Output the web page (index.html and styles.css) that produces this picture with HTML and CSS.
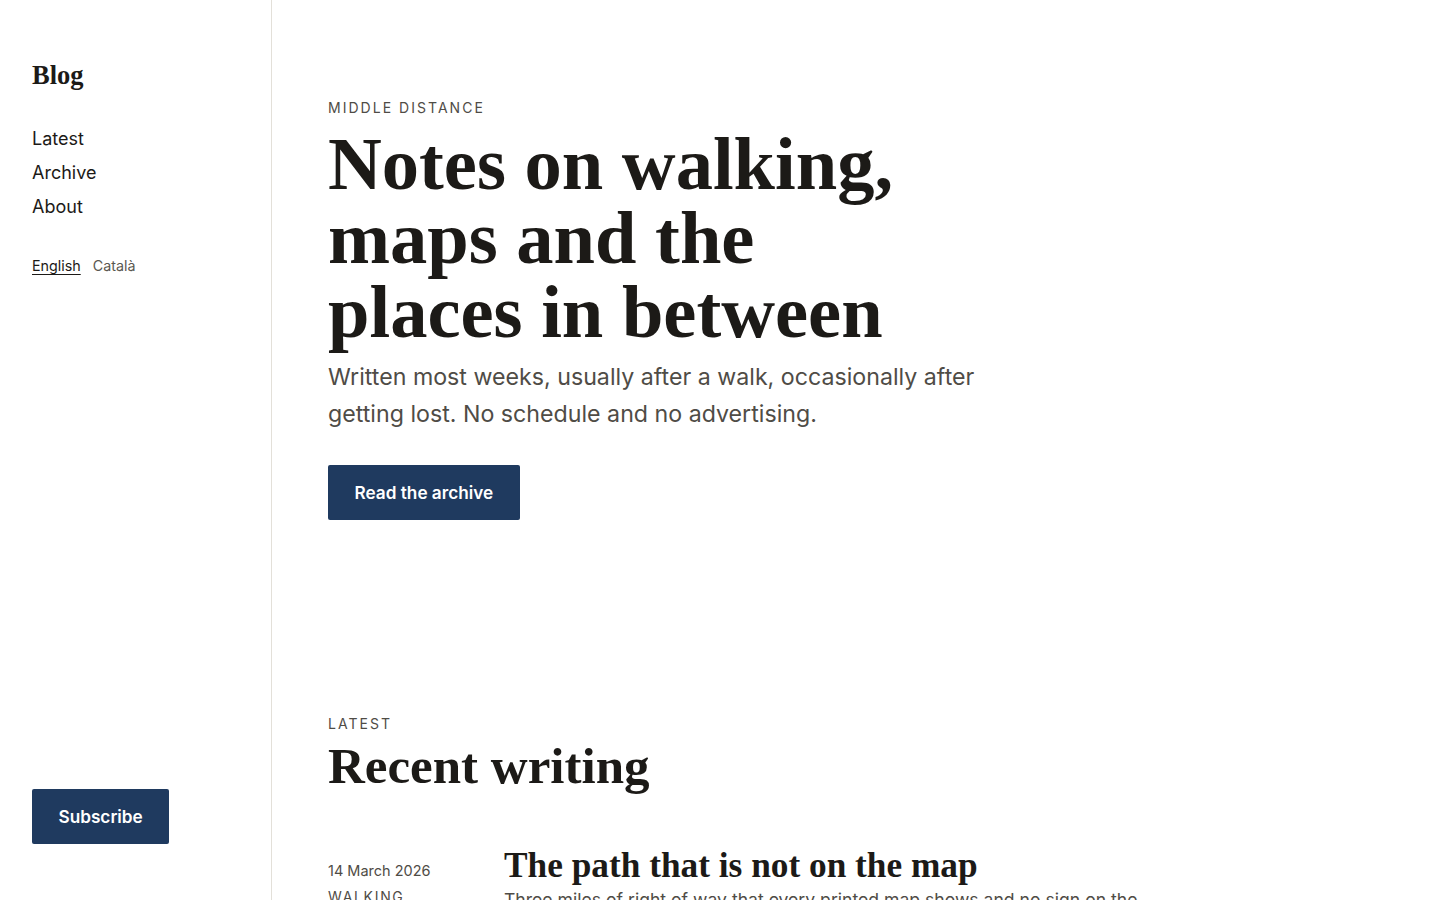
FILE: index.html
```html
<!DOCTYPE html>
<html lang="en">
<head>
<meta charset="utf-8">
<title>Blog — Middle Distance</title>
<link rel="stylesheet" href="styles.css">
</head>
<body>
<div class="layout">
  <aside class="sidebar">
    <div class="sidebar-top">
      <a class="brand" href="#">Blog</a>
      <nav class="nav">
        <a href="#">Latest</a>
        <a href="#">Archive</a>
        <a href="#">About</a>
      </nav>
      <div class="langs">
        <a class="lang active" href="#">English</a>
        <a class="lang" href="#">Català</a>
      </div>
    </div>
    <a class="btn" href="#">Subscribe</a>
  </aside>
  <main class="main">
    <section class="hero">
      <p class="eyebrow">Middle distance</p>
      <h1 class="hero-title">Notes on walking, maps and the places in between</h1>
      <p class="lede">Written most weeks, usually after a walk, occasionally after getting lost. No schedule and no advertising.</p>
      <a class="btn" href="#">Read the archive</a>
    </section>
    <section class="latest">
      <p class="eyebrow">Latest</p>
      <h2 class="section-title">Recent writing</h2>
      <ul class="posts">
        <li class="post">
          <div class="post-meta">
            <time>14 March 2026</time>
            <span class="tag">Walking</span>
          </div>
          <div class="post-body">
            <h3 class="post-title">The path that is not on the map</h3>
            <p class="post-excerpt">Three miles of right of way that every printed map shows and no sign on the ground admits to. Notes from a wet afternoon spent looking for it.</p>
          </div>
        </li>
      </ul>
    </section>
  </main>
</div>
</body>
</html>
```
FILE: styles.css
```css
* { box-sizing: border-box; }
html, body { margin: 0; padding: 0; }
body {
  background: #ffffff;
  color: #1c1a17;
  font-family: Inter, "Noto Sans", sans-serif;
}
a { color: inherit; text-decoration: none; }

.layout {
  display: grid;
  grid-template-columns: 272px 1fr;
  min-height: 100vh;
}

.sidebar {
  position: sticky;
  top: 0;
  height: 100vh;
  border-right: 1px solid #e3e0d9;
  padding: 59px 32px 56px;
  display: flex;
  flex-direction: column;
  justify-content: space-between;
  align-items: flex-start;
}
.sidebar-top { display: flex; flex-direction: column; align-items: flex-start; }
.brand {
  font-family: "Liberation Serif", serif;
  font-weight: 700;
  font-size: 26.5px;
  line-height: 32px;
  color: #1c1a17;
}
.nav {
  margin-top: 31px;
  display: flex;
  flex-direction: column;
}
.nav a {
  font-size: 18px;
  line-height: 34px;
  color: #1c1a17;
}
.langs {
  margin-top: 32px;
  display: flex;
  gap: 12px;
}
.lang {
  font-size: 14.3px;
  line-height: 20px;
  color: #5a5750;
}
.lang.active {
  color: #1c1a17;
  text-decoration: underline;
  text-underline-offset: 3px;
}

.btn {
  display: inline-block;
  background: #1f3a5f;
  color: #ffffff;
  font-family: Inter, sans-serif;
  font-weight: 600;
  font-size: 17.2px;
  line-height: 23px;
  padding: 16px 26.5px;
  border-radius: 2px;
}

.main {
  padding: 98px 56px 0 56px;
}

.eyebrow {
  margin: 0;
  font-size: 14px;
  line-height: 20px;
  letter-spacing: 0.145em;
  text-transform: uppercase;
  color: #4f4c46;
}

.hero { max-width: 680px; }
.hero-title {
  margin: 9px 0 0;
  font-family: "Liberation Serif", serif;
  font-weight: 700;
  font-size: 74.5px;
  line-height: 74px;
  max-width: 620px;
  color: #1c1a17;
}
.lede {
  margin: 10px 0 0;
  font-size: 23.2px;
  line-height: 37px;
  color: #4f4c46;
  max-width: 680px;
}
.hero .btn { margin-top: 32px; }

.latest { margin-top: 194px; }
.section-title {
  margin: 4px 0 0;
  font-family: "Liberation Serif", serif;
  font-weight: 700;
  font-size: 51px;
  line-height: 56px;
  color: #1c1a17;
}

.posts {
  list-style: none;
  margin: 51px 0 0;
  padding: 0;
  max-width: 830px;
}
.post {
  display: grid;
  grid-template-columns: 176px 1fr;
}
.post-meta {
  display: flex;
  flex-direction: column;
  padding-top: 15px;
  gap: 5px;
}
.post-meta time {
  font-size: 14.5px;
  line-height: 22px;
  color: #4f4c46;
}
.tag {
  font-size: 14px;
  line-height: 20px;
  letter-spacing: 0.12em;
  text-transform: uppercase;
  color: #4f4c46;
}
.post-title {
  margin: 0;
  font-family: "Liberation Serif", serif;
  font-weight: 700;
  font-size: 35.3px;
  line-height: 42px;
  color: #1c1a17;
}
.post-excerpt {
  margin: -1px 0 0;
  font-size: 17.6px;
  line-height: 28px;
  color: #4f4c46;
}
```
